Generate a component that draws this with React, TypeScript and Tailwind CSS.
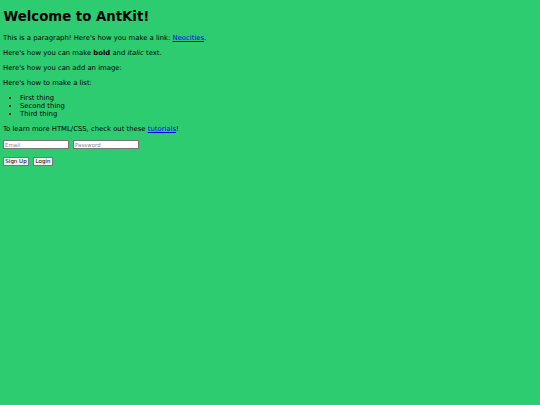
export default function App() {
  return (
    <div
      className="min-h-[405px] bg-[#2ecc71] px-[3px] py-[1px] text-[6.85px] leading-[8px] text-black"
      style={{ fontFamily: '"DejaVu Sans", sans-serif' }}
    >
      <h1 className="mt-[8px] mb-[9px] pl-[0.5px] text-[13.3px] leading-[16px] font-bold">Welcome to AntKit!</h1>
      <p className="my-[7px]">
        This is a paragraph! Here's how you make a link:{" "}
        <a href="#" className="text-[#0000ee] underline">
          Neocities
        </a>
        .
      </p>
      <p className="my-[7px]">
        Here's how you can make <b>bold</b> and <i>italic</i> text.
      </p>
      <p className="my-[7px]">Here's how you can add an image:</p>
      <p className="my-[7px]">Here's how to make a list:</p>
      <ul className="my-[7px] list-disc pl-[17px]">
        <li>First thing</li>
        <li>Second thing</li>
        <li>Third thing</li>
      </ul>
      <p className="my-[7px]">
        To learn more HTML/CSS, check out these{" "}
        <a href="#" className="text-[#0000ee] underline">
          tutorials
        </a>
        !
      </p>
      <form className="flex flex-col">
        <div className="flex gap-[4px]">
          <input
            type="email"
            placeholder="Email"
            className="h-[9px] w-[66px] border-[0.5px] border-[#767676] bg-white px-[1px] text-[5.5px] placeholder:text-[#8a8a8a]"
          />
          <input
            type="password"
            placeholder="Password"
            className="h-[9px] w-[66px] border-[0.5px] border-[#767676] bg-white px-[1px] text-[5.5px] placeholder:text-[#8a8a8a]"
          />
        </div>
        <div className="mt-[8px] flex gap-[4px]">
          <button
            type="button"
            className="h-[9px] w-[26px] border-[0.5px] border-[#767676] bg-[#efefef] text-[5.5px] leading-[7px]"
          >
            Sign Up
          </button>
          <button
            type="button"
            className="h-[9px] w-[20px] border-[0.5px] border-[#767676] bg-[#efefef] text-[5.5px] leading-[7px]"
          >
            Login
          </button>
        </div>
      </form>
    </div>
  )
}
